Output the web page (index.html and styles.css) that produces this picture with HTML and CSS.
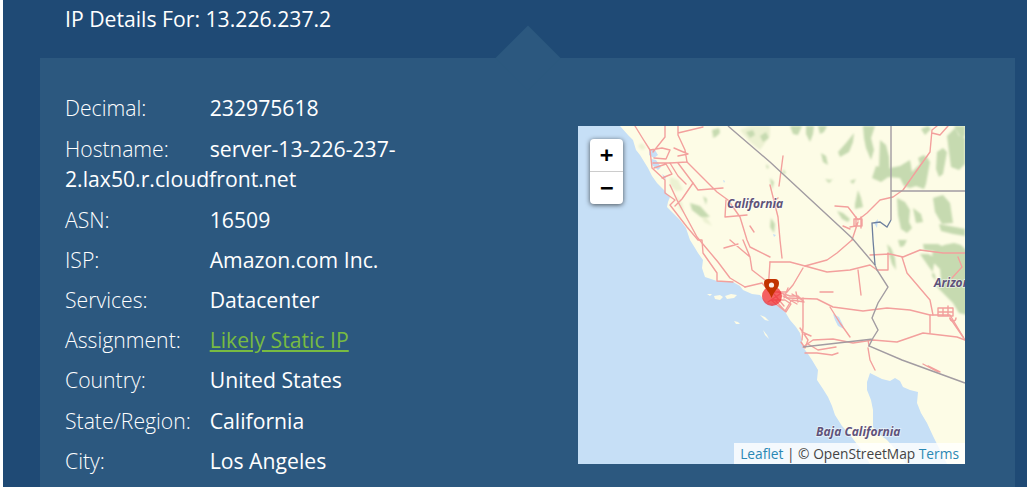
FILE: index.html
```html
<!DOCTYPE html>
<html lang="en">
<head>
<meta charset="utf-8">
<title>IP Details</title>
<link rel="stylesheet" href="styles.css">
</head>
<body>
<main class="panel">
  <h2 class="panel-title">IP Details For: 13.226.237.2</h2>
  <section class="card">
    <div class="details">
      <p class="row"><span class="label">Decimal:</span>232975618</p>
      <p class="row"><span class="label">Hostname:</span>server-13-226-237-2.lax50.r.cloudfront.net</p>
      <p class="row"><span class="label">ASN:</span>16509</p>
      <p class="row"><span class="label">ISP:</span>Amazon.com Inc.</p>
      <p class="row"><span class="label">Services:</span>Datacenter</p>
      <p class="row"><span class="label">Assignment:</span><a class="static-link" href="#">Likely Static IP</a></p>
      <p class="row"><span class="label">Country:</span>United States</p>
      <p class="row"><span class="label">State/Region:</span>California</p>
      <p class="row"><span class="label">City:</span>Los Angeles</p>
    </div>
    <div class="map">
      <svg class="map-art" viewBox="0 0 387 338" width="387" height="338" aria-label="Map of California">
        <defs>
          <filter id="soft" x="-5%" y="-5%" width="110%" height="110%"><feGaussianBlur stdDeviation="0.55"/></filter>
          <filter id="softer" x="-5%" y="-5%" width="110%" height="110%"><feGaussianBlur stdDeviation="0.9"/></filter>
        </defs>
        <rect class="land" width="387" height="338"/>
        <g filter="url(#softer)">
          <path class="tint" d="M92 51l8 3l5 10l-7 1l-6-6zM98 69l6 8l2 10l-5-5zM134 4l8-1l-2 7l-6 2zM162 4l10-4h20v10l-10 14l-10-8zM60 20l4-3l4 5l-4 2zM120 84l8 6l6 10l-8-4z"/>
          <path class="green" d="M112 77l10 3l10 11l-9 0l-9-7zM125 70l4 3l-1 6zM134 4l7-2l1 5l-6 5zM168 6l7-2l2 5l-5 3zM182 10l6-4l3 6l-6 4zM212 0h12l-4 9l-5-1zM228 0h8l-1 8l-3 8l-4-8zM240 0h9l-3 6l-4 2zM260 26l8-9l8-10l-1 9l-4 10l-9 5zM243 27l5 3l2 9l-5-3zM247 53l5 1l3-1l-4 4zM285 0h12l-4 12l3 12l-3 10l-5-12l-2-10zM302 14l6 5l3 12l1 20l-7 1l-4-10zM294 52l4-12l8 2l3 10l-6 4zM312 42l10-2l10-6l2 12l8-8l6-8l4 6l-4 22l-2 5l-8-3l-6 2l-6-2l-4-8l-12-1zM340 32l6-3l3 4l-6 8zM359 26l6-4l4 4l-4 22l-4 3l-3-8zM369 10l8-8l4 8l6 2v26l-6 6l-8-3l-2-15zM376 0h11v10l-4 2zM343 3l7-3l3 3l-6 6zM319 72l8 4l5 8l-1 12l3 6l-5 5l-6-4l-3-14zM335 82l8 6l2 8l-7 1zM355 72l10-3l7 8l3 20l-11 1l-7-12zM361 98l16 3l10 2v7l-12-2l-12-3zM259 85l6 2l7 6l-2 3l-6-3zM277 78l3-14l3 8l2 9l-8 2zM192 52l4 4l-2 8zM205 43l3 4l-3 1zM188 38l3 3l-2 2zM193 92l4 6l-1 9l-4-6zM272 55l6-2l-3 5zM320 114l9 0l-3 6l-4 1zM309 118l4 4l4 10l1 12l-4-6l-3-10zM342 128l8 0l8 4l-2 6l-2 12l8 10l1-5l-1-12l-6-6l-2-10l12-8l10-2l7 2l6 6v64l-8-2l-6-10l-8-8l-8-8l-2-12l-6-8zM345 118l15 0l12 6l-10 2l-16-2z"/>
        </g>
        <g filter="url(#soft)">
          <path class="water" d="M0 0H42L50 9L55 14L58 24L62 29L70 42L74 50L79 57L86 64L92 71L90 76L89 81L96 88L102 94L108 102L112 114L117 122L120 127L125 134L124 142L127 151L139 155L155 156L162 160L165 164L174 168L182 169L189 177L198 178L205 182L209 189L212 194L218 201L222 207L224 215L225 221L230 228L234 234L240 244L239 254L245 263L250 271L254 280L257 289L264 300L272 309L282 322L292 338H0Z"/>
          <path class="water" d="M292 247L289 256L289 264L293 274L295 284L295 301L301 308L309 314L320 326L328 338H369L362 324L355 310L349 297L343 287L339 277L340 266L332 264L325 261L322 255L317 252L312 255L304 253Z"/>
          <path class="land" d="M129 168l5 0l-2 2zM136 170l6-1l3 2l-3 3l-5-1zM147 170l6-2l6 1l-3 3l-7 1zM156 195l4 1l2 2l-4 0zM182 189l5 2l4 4l-4-1zM185 204l4 5l2 4l-4-4z"/>
          <path class="water" d="M71 24l6 0l3 5l-4 3l-5-3zM73 33l5 1l5 7l-3 3l-6-5zM84 48l4 3l-1 3zM255 188l6 3l4 8l1 4l-6-3l-3-6zM145 54l2 1l-1 2zM195 108l3 1l-2 2zM296 97l4-4l-1 9z"/>
          <g class="roads">
            <path d="M57 0L65 13L72 24L74 42L87 54L87 67L97 74L92 79L109 101L120 114L124 114L125 127L139 147L139 155L155 156"/>
            <path d="M87 0L87 11L75 26M100 0L100 9L107 24L109 36L92 37L75 37M100 7L125 1M72 24L84 22L92 24L88 33L76 32M76 42L88 38L94 48L84 52M96 22L110 28L100 30"/>
            <path d="M109 36L125 52L139 66L150 74L162 91L169 114L172 121L192 131M100 37L115 57L120 64L145 62M92 37L100 50L108 58"/>
            <path d="M92 59L99 74L119 111L140 136L152 152L167 161M147 91L169 89M148 74L147 91M115 57L104 73L97 80"/>
            <path d="M152 114L172 131L174 144L187 154M165 114L172 131M167 161L184 157L192 166M172 100L176 106M146 122L160 118"/>
            <path d="M192 136L212 136L227 140L249 146L272 144L292 139L299 144"/>
            <path d="M227 140L249 134L259 127L274 114M225 142L215 159L209 166L192 166"/>
            <path d="M209 172L239 173L255 181L285 185L309 182L332 184L352 189L372 189L387 214"/>
            <path d="M310 127L310 144L299 144M292 129L312 128L325 131L342 124L365 127L387 127"/>
            <path d="M324 131L329 147L352 174L355 189M380 131L384 141L374 152"/>
            <path d="M225 221L235 214L255 213L275 217L295 214L319 216L345 207L379 211L387 214M352 189L352 207M372 192L385 211"/>
            <path d="M225 172L225 201L224 214M252 181L262 197L272 211M242 166L255 166M230 218L240 224L258 221"/>
            <path d="M257 80L270 81L280 94L289 87L302 74L315 71L325 64L337 47L352 26L354 4L359 0M354 7L362 9L370 0"/>
            <path d="M280 96L274 114M276 93h8v7h-8zM278 91v11M283 91v11M272 101l6-1M265 100l7 3"/>
            <path d="M192 59L200 91L202 114M192 136L190 165M196 75L200 72M202 114L204 132"/>
            <path d="M360 182h15v8h-15zM365 182v8M370 180v10M360 186h15M372 192a3 3 0 1 0 6 0"/>
            <path d="M193 174h14l6 4l-5 8zM200 166l12 4h8l6 6l-12-2M205 170l14 8M198 175l9 10l6-10l-9-8M214 168l10 6M222 202l8 12l-3 8l-4-6M224 206l9 4M196 168l10 12M190 176l12-8M210 162l-4 10M218 166l2 10"/>
            <path d="M227 227l12 0l15 2l6-2"/>
            <path d="M290 222l2 12L297 244M350 240L362 246M345 238l15 8M290 214l1 6"/>
            <path d="M205 30L201 60M280 144l3 25"/>
          </g>
          <path class="border" d="M150 0L192 36L274 112L297 139L299 144L310 161L300 177L294 192L300 204L295 212L291 220L324 234L387 257M225 221L295 213"/>
          <path class="border" d="M313 0V94M313 65H387"/>
          <path class="river" d="M295 114L294 97L302 96L309 101L313 94M295 114L297 139"/>
        </g>
        <g class="map-labels">
          <text x="149" y="82">California</text>
          <text x="356" y="161">Arizona</text>
          <text x="238" y="310">Baja California</text>
        </g>
        <circle class="dot" cx="194" cy="170" r="10"/>
        <path class="pin" d="M190 154h7c2.500 0 4 1.500 4 4c0 3-1 4.500-3 7c-2 3-3.500 5-4.500 8c-1-3-2.500-5-4.500-8c-2-2.500-3-4-3-7c0-2.500 1.500-4 4-4z" transform="translate(0 -1)"/>
        <circle class="pin-hole" cx="193.500" cy="159" r="2.600"/>
      </svg>
      <div class="zoom">
        <a class="zoom-btn" href="#">+</a>
        <a class="zoom-btn" href="#">−</a>
      </div>
      <div class="attribution"><a href="#">Leaflet</a> | © OpenStreetMap <a href="#">Terms</a></div>
    </div>
  </section>
</main>
</body>
</html>
```

FILE: styles.css
```css
html, body {
  margin: 0;
  height: 487px;
  overflow: hidden;
  background: #fff;
}
body {
  padding-left: 3px;
  font-family: "Open Sans", sans-serif;
  color: #fff;
  box-sizing: border-box;
}
.panel {
  background: #1f4a75;
  height: 487px;
  overflow: hidden;
}
.panel-title {
  margin: 0;
  padding: 4px 0 24px 62px;
  font-size: 21.200px;
  line-height: 30px;
  font-weight: 400;
}
.card {
  position: relative;
  margin: 0 12px 0 37px;
  padding: 35.450px 50px 0 25px;
  background: #2c587f;
  height: 500px;
  display: flex;
  justify-content: space-between;
  align-items: flex-start;
}
.card::before {
  content: "";
  position: absolute;
  left: 465px;
  top: -23px;
  width: 46px;
  height: 46px;
  background: #2c587f;
  transform: rotate(45deg);
}
.details {
  position: relative;
  width: 345px;
}
.row {
  margin: 0 0 9.650px;
  font-size: 21.200px;
  line-height: 30.600px;
}
.label {
  display: inline-block;
  width: 144.700px;
  font-weight: 300;
}
.static-link {
  color: #78bb42;
  text-decoration: underline;
}
.map {
  position: relative;
  width: 387px;
  height: 338px;
  margin-top: 32.550px;
  overflow: hidden;
  background: #c6dff6;
  flex: none;
}
.map-art {
  display: block;
}
.land { fill: #fdfce6; }
.water { fill: #c6dff6; }
.tint { fill: #ecf1d2; }
.green { fill: #c6dab0; }
.roads {
  fill: none;
  stroke: #f3a09d;
  stroke-width: 1.400;
  stroke-linejoin: round;
  stroke-linecap: round;
}
.border {
  fill: none;
  stroke: #a29ca2;
  stroke-width: 1.400;
}
.river {
  fill: none;
  stroke: #6d7f9e;
  stroke-width: 1.300;
}
.map-labels text {
  font-family: "Open Sans", sans-serif;
  font-size: 12px;
  font-weight: 700;
  font-style: italic;
  fill: #5f5279;
  stroke: rgba(255, 255, 255, .6);
  stroke-width: 1.500px;
  paint-order: stroke;
}
.dot { fill: #f0262e; fill-opacity: .72; }
.pin { fill: #c23300; }
.pin-hole { fill: #fbeee8; }
.zoom {
  position: absolute;
  left: 12px;
  top: 13px;
  width: 33px;
  background: #fff;
  border-radius: 4px;
  box-shadow: 0 1px 5px rgba(0, 0, 0, .65);
}
.zoom-btn {
  display: block;
  height: 32px;
  line-height: 32px;
  text-align: center;
  font-family: "DejaVu Sans Mono", monospace;
  font-size: 22px;
  font-weight: 700;
  color: #000;
  text-decoration: none;
}
.zoom-btn + .zoom-btn {
  border-top: 1px solid #ccc;
}
.attribution {
  position: absolute;
  right: 0;
  bottom: 0;
  height: 21px;
  padding: 0 6px;
  line-height: 21px;
  font-size: 13.750px;
  color: #444;
  background: rgba(255, 255, 255, .8);
  white-space: nowrap;
}
.attribution a {
  color: #2a88b4;
  text-decoration: none;
}
```
